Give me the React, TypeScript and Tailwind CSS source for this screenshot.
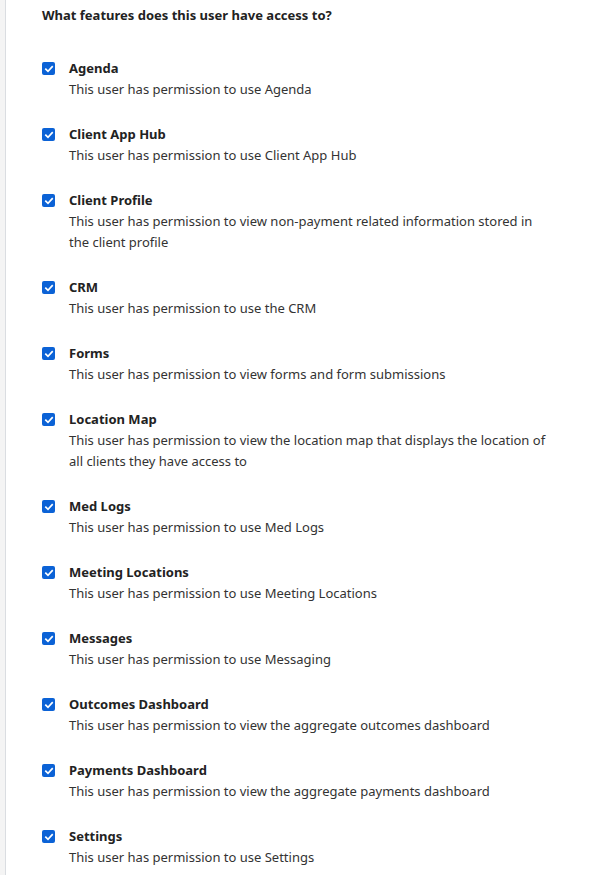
import React from 'react';

interface Feature {
  name: string;
  description: string;
}

const features: Feature[] = [
  { name: 'Agenda', description: 'This user has permission to use Agenda' },
  { name: 'Client App Hub', description: 'This user has permission to use Client App Hub' },
  {
    name: 'Client Profile',
    description:
      'This user has permission to view non-payment related information stored in the client profile',
  },
  { name: 'CRM', description: 'This user has permission to use the CRM' },
  { name: 'Forms', description: 'This user has permission to view forms and form submissions' },
  {
    name: 'Location Map',
    description:
      'This user has permission to view the location map that displays the location of all clients they have access to',
  },
  { name: 'Med Logs', description: 'This user has permission to use Med Logs' },
  { name: 'Meeting Locations', description: 'This user has permission to use Meeting Locations' },
  { name: 'Messages', description: 'This user has permission to use Messaging' },
  {
    name: 'Outcomes Dashboard',
    description: 'This user has permission to view the aggregate outcomes dashboard',
  },
  {
    name: 'Payments Dashboard',
    description: 'This user has permission to view the aggregate payments dashboard',
  },
  { name: 'Settings', description: 'This user has permission to use Settings' },
];

const CheckBox = () => (
  <span className="flex h-[13px] w-[13px] shrink-0 items-center justify-center rounded-[2px] bg-[#0b62d6]">
    <svg viewBox="0 0 12 12" className="h-[10px] w-[10px]" fill="none">
      <path d="M2.2 6.2 L4.8 8.7 L9.8 3.3" stroke="white" strokeWidth={2} strokeLinecap="square" />
    </svg>
  </span>
);

export default function App() {
  return (
    <div className="flex min-h-[875px] bg-white font-['Noto_Sans',sans-serif] text-[13px] leading-[21px]">
      {/* left gutter */}
      <div className="w-[6px] shrink-0 border-r border-[#dadde1] bg-[#f4f4f4]" />

      <div className="flex-1 pl-[36px] pt-[5px]">
        <h2 className="font-bold text-[#222]">What features does this user have access to?</h2>

        <div className="mt-[32px] flex flex-col gap-[24px]">
          {features.map((f) => (
            <div key={f.name} className="flex">
              <div className="flex h-[21px] items-center">
                <CheckBox />
              </div>
              <div className="ml-[14px] w-[480px]">
                <div className="font-bold text-[#222]">{f.name}</div>
                <div className="text-[#333]">{f.description}</div>
              </div>
            </div>
          ))}
        </div>
      </div>
    </div>
  );
}
